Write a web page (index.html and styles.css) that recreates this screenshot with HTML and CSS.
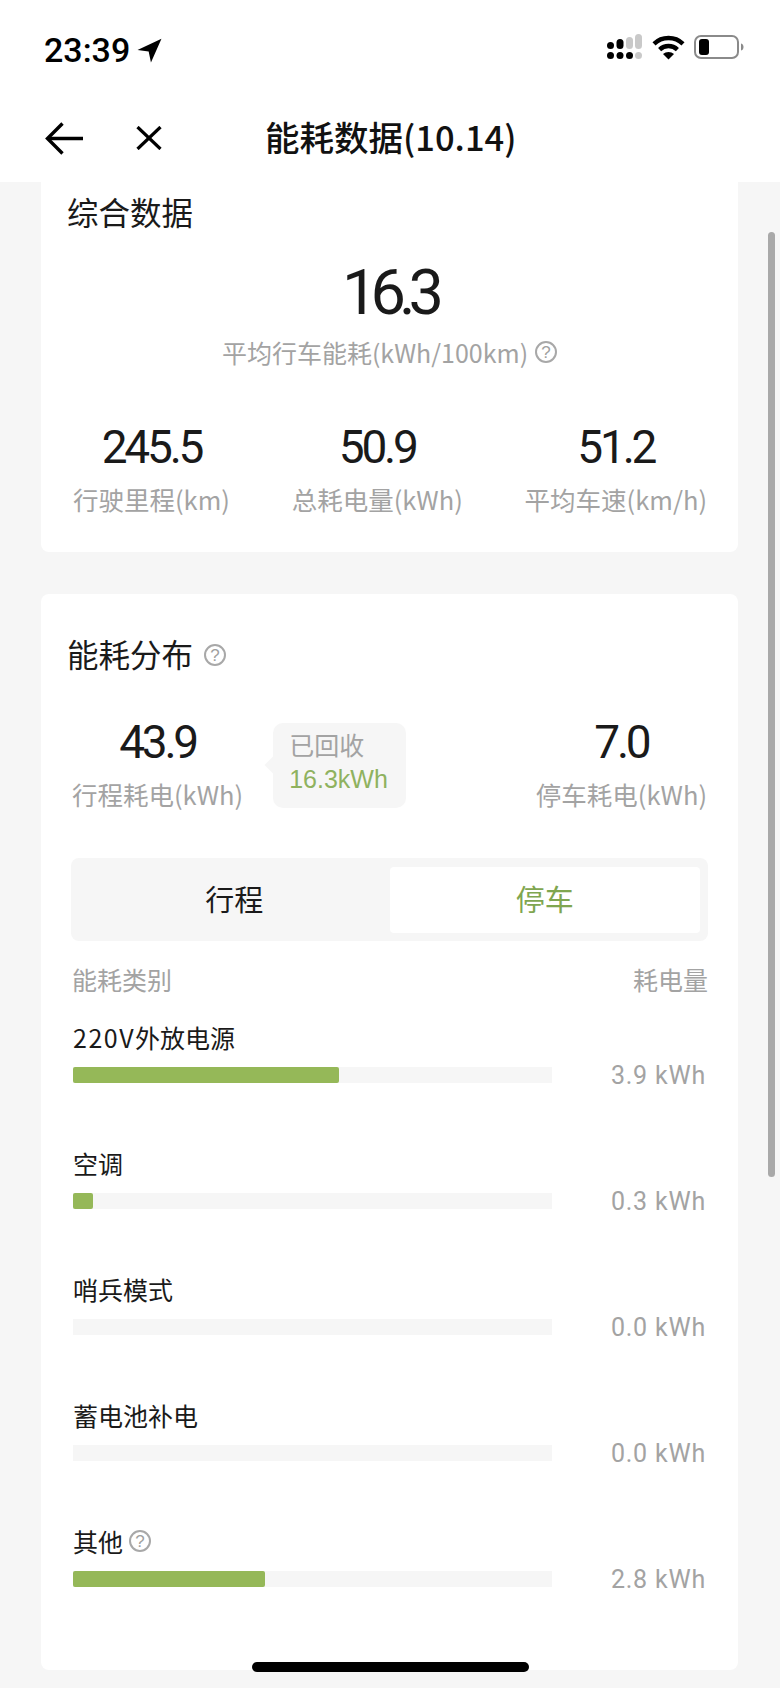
FILE: index.html
```html
<!DOCTYPE html>
<html lang="zh-CN">
<head>
    <meta charset="UTF-8">
    <meta name="viewport" content="width=device-width, initial-scale=1.0">
    <title>能耗数据(10.14)</title>
    <link rel="stylesheet" href="styles.css">
</head>
<body>
    <div class="phone">
        <div class="status-bar">
            <div class="status-time">
                <span>23:39</span>
                <svg class="icon-location" viewBox="0 0 24 24"><path d="M23.5 .8 L0.5 11.6 L11.2 13 L13.4 23.6 Z" fill="#000"/></svg>
            </div>
            <div class="status-icons">
                <svg class="icon-signal" width="36" height="26" viewBox="0 0 36 26">
                    <rect x="0" y="8" width="7" height="7" rx="3.5" fill="#000"/>
                    <rect x="9.5" y="5" width="7" height="10" rx="3.5" fill="#000"/>
                    <rect x="19" y="3" width="7" height="12" rx="3.5" fill="#c9c9c9"/>
                    <rect x="28" y="0" width="7" height="15" rx="3.5" fill="#c9c9c9"/>
                    <circle cx="3.5" cy="21.5" r="3.5" fill="#000"/>
                    <circle cx="13" cy="21.5" r="3.5" fill="#000"/>
                    <circle cx="22.5" cy="21.5" r="3.5" fill="#000"/>
                    <circle cx="31.5" cy="21.5" r="3.5" fill="#c9c9c9"/>
                </svg>
                <svg class="icon-wifi" width="33" height="25" viewBox="0 0 33 25" fill="none" stroke="#000" stroke-width="4.4">
                    <path d="M2 8.8 C10 1 23 1 31 8.8"/>
                    <path d="M7.6 14.6 C12.6 9.8 20.4 9.8 25.4 14.6"/>
                    <path d="M16.5 24.5 L11 19 C14 16.2 19 16.2 22 19 Z" fill="#000" stroke="none"/>
                </svg>
                <svg class="icon-battery" width="50" height="24" viewBox="0 0 50 24">
                    <rect x="1" y="1" width="43" height="22" rx="6" fill="none" stroke="#8a8a8a" stroke-width="2"/>
                    <rect x="5" y="4" width="10" height="16" rx="3" fill="#000"/>
                    <path d="M47 8.5 C49 9 49.5 10.5 49.5 12 C49.5 13.5 49 15 47 15.5 Z" fill="#8a8a8a"/>
                </svg>
            </div>
        </div>

        <div class="nav-bar">
            <svg class="icon-back" width="39" height="33" viewBox="0 0 39 33" fill="none" stroke="#000" stroke-width="3.4">
                <path d="M38 16.5 H3"/>
                <path d="M17.5 1.5 L2.5 16.5 L17.5 31.5"/>
            </svg>
            <svg class="icon-close" width="26" height="24" viewBox="0 0 26 24" fill="none" stroke="#000" stroke-width="3.2">
                <path d="M1.5 1 L24.5 23"/>
                <path d="M24.5 1 L1.5 23"/>
            </svg>
            <h1 class="nav-title">能耗数据(10.14)</h1>
        </div>

        <div class="content">
            <section class="card card-summary">
                <h2 class="card-title">综合数据</h2>
                <div class="summary-value">16.3</div>
                <div class="summary-label">
                    平均行车能耗(kWh/100km)
                    <span class="help">?</span>
                </div>
                <div class="stats">
                    <div class="stat">
                        <div class="stat-value">245.5</div>
                        <div class="stat-label">行驶里程(km)</div>
                    </div>
                    <div class="stat">
                        <div class="stat-value">50.9</div>
                        <div class="stat-label">总耗电量(kWh)</div>
                    </div>
                    <div class="stat">
                        <div class="stat-value">51.2</div>
                        <div class="stat-label">平均车速(km/h)</div>
                    </div>
                </div>
            </section>

            <section class="card card-usage">
                <h2 class="card-title">能耗分布 <span class="help help-title">?</span></h2>
                <div class="usage-top">
                    <div class="stat">
                        <div class="stat-value">43.9</div>
                        <div class="stat-label">行程耗电(kWh)</div>
                    </div>
                    <div class="recovered">
                        <div class="recovered-label">已回收</div>
                        <div class="recovered-value">16.3kWh</div>
                    </div>
                    <div class="stat stat-right">
                        <div class="stat-value">7.0</div>
                        <div class="stat-label">停车耗电(kWh)</div>
                    </div>
                </div>

                <div class="tabs">
                    <div class="tab">行程</div>
                    <div class="tab tab-active">停车</div>
                </div>

                <div class="list-head">
                    <span>能耗类别</span>
                    <span>耗电量</span>
                </div>

                <div class="rows">
                    <div class="row">
                        <div class="row-label"><span><span class="latin">220V</span>外放电源</span></div>
                        <div class="row-line">
                            <div class="bar"><div class="bar-fill" style="width:55.5%"></div></div>
                            <span class="row-value">3.9 kWh</span>
                        </div>
                    </div>
                    <div class="row">
                        <div class="row-label">空调</div>
                        <div class="row-line">
                            <div class="bar"><div class="bar-fill" style="width:4.2%"></div></div>
                            <span class="row-value">0.3 kWh</span>
                        </div>
                    </div>
                    <div class="row">
                        <div class="row-label">哨兵模式</div>
                        <div class="row-line">
                            <div class="bar"></div>
                            <span class="row-value">0.0 kWh</span>
                        </div>
                    </div>
                    <div class="row">
                        <div class="row-label">蓄电池补电</div>
                        <div class="row-line">
                            <div class="bar"></div>
                            <span class="row-value">0.0 kWh</span>
                        </div>
                    </div>
                    <div class="row">
                        <div class="row-label">其他 <span class="help">?</span></div>
                        <div class="row-line">
                            <div class="bar"><div class="bar-fill" style="width:40%"></div></div>
                            <span class="row-value">2.8 kWh</span>
                        </div>
                    </div>
                </div>
            </section>
        </div>

        <div class="scrollbar"></div>
        <div class="home-indicator"></div>
    </div>
</body>
</html>
```

FILE: styles.css
```css
* {
    box-sizing: border-box;
}

body {
    margin: 0;
    background: #f6f6f6;
    color: #1a1a1a;
    font-family: "Noto Sans CJK SC", "Liberation Sans", sans-serif;
}

.phone {
    position: relative;
    width: 780px;
    height: 1688px;
    overflow: hidden;
    display: flex;
    flex-direction: column;
}

/* status bar */
.status-bar {
    height: 84px;
    padding: 34px 38px 0 44px;
    background: #fff;
    display: flex;
    justify-content: space-between;
    align-items: flex-start;
}

.status-time {
    display: flex;
    align-items: center;
    gap: 7px;
    font-family: Roboto, "Liberation Sans", sans-serif;
    font-size: 34px;
    font-weight: 500;
    line-height: 32px;
    color: #000;
}

.icon-location {
    width: 25px;
    height: 25px;
}

.status-icons {
    display: flex;
    align-items: center;
    gap: 9px;
    margin-right: -2px;
}

/* nav bar */
.nav-bar {
    height: 98px;
    background: #fff;
    display: flex;
    align-items: center;
    padding: 10px 0 0 45px;
}

.icon-close {
    margin-left: 52px;
}

.nav-title {
    margin: 0 0 4px 103px;
    font-size: 34.5px;
    font-weight: 500;
    line-height: 48px;
    white-space: nowrap;
    color: #111;
}

/* cards */
.content {
    flex: 1;
    padding: 0 42px 0 41px;
    overflow: hidden;
}

.card {
    background: #fff;
    border-radius: 8px;
    padding: 0 26px;
}

.card-summary {
    height: 370px;
    padding-top: 8px;
    border-radius: 0 0 8px 8px;
}

.card-usage {
    margin-top: 42px;
    height: 1076px;
    padding-top: 38px;
}

.card-title {
    margin: 0;
    font-size: 31.5px;
    font-weight: 400;
    line-height: 42px;
    display: flex;
    align-items: center;
    color: #1a1a1a;
}

.summary-value {
    margin-top: 26px;
    text-align: center;
    font-family: Roboto, "Liberation Sans", sans-serif;
    font-size: 63px;
    letter-spacing: -7px;
    line-height: 70px;
    color: #1a1a1a;
}

.summary-label {
    margin-top: 6px;
    display: flex;
    justify-content: center;
    align-items: center;
    gap: 7px;
    font-size: 25px;
    line-height: 36px;
    color: #a3a3a3;
}

.help {
    display: inline-flex;
    justify-content: center;
    align-items: center;
    width: 22px;
    height: 22px;
    border: 2px solid #a8a8a8;
    border-radius: 50%;
    font-family: "Liberation Sans", sans-serif;
    font-size: 17px;
    line-height: 1;
    color: #a0a0a0;
}

.help-title {
    margin: 4px 0 0 11px;
}

.stats {
    margin: 52px 5px 0 6px;
    display: flex;
    justify-content: space-between;
}

.stat {
    text-align: center;
}

.stat-value {
    font-family: Roboto, "Liberation Sans", sans-serif;
    font-size: 46px;
    letter-spacing: -3.2px;
    line-height: 50px;
    color: #1a1a1a;
}

.stat-label {
    margin-top: 9px;
    font-size: 25.5px;
    line-height: 36px;
    white-space: nowrap;
    color: #a3a3a3;
}

/* energy split */
.usage-top {
    margin: 43px 5px 0;
    display: flex;
    align-items: flex-start;
}

.stat-right {
    margin-left: auto;
}

.recovered {
    position: relative;
    width: 133px;
    height: 85px;
    margin: 6px 0 0 30px;
    padding: 4px 0 0 16px;
    background: #f6f6f6;
    border-radius: 10px;
    font-size: 25px;
    line-height: 35px;
}

.recovered::before {
    content: "";
    position: absolute;
    left: -6px;
    top: 36px;
    width: 12px;
    height: 12px;
    background: #f6f6f6;
    transform: rotate(45deg);
}

.recovered-label {
    color: #a3a3a3;
}

.recovered-value {
    font-family: "Liberation Sans", sans-serif;
    font-size: 25px;
    color: #8fb25f;
}

.tabs {
    margin: 46px 4px 0;
    height: 83px;
    padding: 9px 8px 8px;
    background: #f6f6f6;
    border-radius: 8px;
    display: flex;
}

.tab {
    flex: 1;
    text-align: center;
    font-size: 29px;
    line-height: 62px;
    color: #1a1a1a;
}

.tab-active {
    background: #fff;
    border-radius: 4px;
    color: #7fa650;
}

.list-head {
    margin: 20px 4px 0 5px;
    display: flex;
    justify-content: space-between;
    font-size: 25px;
    line-height: 36px;
    color: #a3a3a3;
}

.rows {
    margin: 22px 6px 0 6px;
    display: flex;
    flex-direction: column;
    gap: 62px;
}

.row-label {
    display: flex;
    align-items: center;
    gap: 6px;
    font-size: 25px;
    line-height: 36px;
    color: #1a1a1a;
}

.latin {
    letter-spacing: 1.5px;
}

.row-line {
    margin-top: 12px;
    height: 16px;
    display: flex;
    align-items: center;
    justify-content: space-between;
}

.bar {
    width: 479px;
    height: 16px;
    background: #f6f6f6;
}

.bar-fill {
    height: 100%;
    background: #95b858;
    border-radius: 2px;
}

.row-value {
    font-family: Roboto, "Liberation Sans", sans-serif;
    font-size: 25px;
    letter-spacing: 0.8px;
    color: #a3a3a3;
}

/* overlays */
.scrollbar {
    position: absolute;
    right: 5px;
    top: 232px;
    width: 7px;
    height: 945px;
    background: #a9a9a9;
    border-radius: 4px;
}

.home-indicator {
    position: absolute;
    left: 252px;
    top: 1662px;
    width: 277px;
    height: 10px;
    background: #000;
    border-radius: 5px;
}
```
